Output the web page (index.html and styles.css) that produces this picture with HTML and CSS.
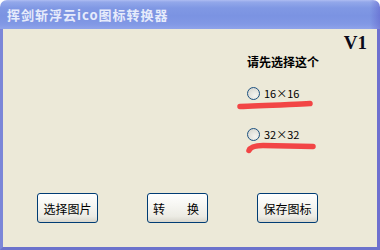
FILE: index.html
```html
<!DOCTYPE html>
<html lang="zh-CN">
<head>
<meta charset="utf-8">
<title>挥剑斩浮云ico图标转换器</title>
<link rel="stylesheet" href="styles.css">
</head>
<body>
<div class="window">
  <div class="titlebar">挥剑斩浮云ico图标转换器</div>
  <div class="content">
    <div class="version">V1</div>
    <div class="panel">
      <div class="prompt">请先选择这个</div>
      <div class="option first">
        <span class="radio"></span><span class="label">16×16</span>
        <svg class="mark" width="80" height="12" viewBox="0 0 80 12"><path d="M3 6.5 C 20 6.2, 50 4.6, 73 3.6" /></svg>
      </div>
      <div class="option second">
        <span class="radio"></span><span class="label">32×32</span>
        <svg class="mark" width="82" height="12" viewBox="0 0 82 12"><path d="M12 9.5 Q 14 4.5 26 4.5 L 76 5.5" /></svg>
      </div>
    </div>
    <div class="buttons">
      <button class="btn">选择图片</button>
      <button class="btn split"><span>转</span><span>换</span></button>
      <button class="btn">保存图标</button>
    </div>
  </div>
</div>
</body>
</html>
```
FILE: styles.css
```css
html, body {
  margin: 0;
  padding: 0;
  background: #ffffff;
}

.window {
  width: 380px;
  height: 250px;
  display: flex;
  flex-direction: column;
  font-family: "Noto Sans CJK SC", "Noto Sans", sans-serif;
}

.titlebar {
  height: 29px;
  box-sizing: border-box;
  padding: 0 0 0 7px;
  display: flex;
  align-items: center;
  border-radius: 7px 7px 0 0;
  background:
    linear-gradient(to right, rgba(0,0,0,0) 0, rgba(0,0,0,0) 370px, rgba(80,70,190,0.35) 380px),
    linear-gradient(to bottom, #aebdf2 0, #93a8ea 2px, #8098e4 8px, #7b93e2 16px, #8198e5 24px, #8fa3ea 29px);
  color: #e6ebfb;
  font-size: 13px;
  font-weight: bold;
  letter-spacing: 1px;
  line-height: 14px;
}

.content {
  flex: 1;
  display: flex;
  flex-direction: column;
  background: #ece9d8;
  border-left: 3px solid #7b86d8;
  border-right: 3px solid #6e70cf;
  border-bottom: 3px solid #6b72cc;
  padding: 4px 10px 0 0;
}

.version {
  align-self: flex-end;
  font-family: "Liberation Serif", serif;
  font-weight: bold;
  font-size: 19px;
  line-height: 20px;
  color: #0a0a1a;
}

.panel {
  margin-left: 244px;
  margin-top: 2px;
  display: flex;
  flex-direction: column;
}

.prompt {
  font-size: 12px;
  font-weight: bold;
  line-height: 14px;
  color: #000;
}

.option {
  position: relative;
  display: flex;
  align-items: center;
  height: 13px;
}

.option.first {
  margin-top: 18px;
}

.option.second {
  margin-top: 28px;
}

.radio {
  width: 11px;
  height: 11px;
  border: 1px solid #1c5180;
  border-radius: 50%;
  background: radial-gradient(circle at 65% 70%, #f4f4f0 0, #e2e2dc 55%, #d0d0c8 100%);
}

.label {
  margin-left: 4px;
  font-size: 11px;
  line-height: 13px;
  color: #000;
}

.mark {
  position: absolute;
  left: -10px;
  top: 13px;
  overflow: visible;
}

.mark path {
  fill: none;
  stroke: #f24545;
  stroke-width: 5.5;
  stroke-linecap: round;
}

.buttons {
  margin-top: auto;
  padding: 0 0 24px 34px;
  display: flex;
  gap: 49px;
}

.btn {
  width: 61px;
  height: 30px;
  margin: 0;
  padding: 0;
  border: 1px solid #003c74;
  border-radius: 3px;
  background: linear-gradient(to bottom, #ffffff 0, #f6f6f2 40%, #ecebe4 80%, #d8d6cc 100%);
  font-family: "Noto Sans CJK SC", sans-serif;
  font-size: 12px;
  color: #000;
  display: flex;
  align-items: center;
  justify-content: center;
}

.btn.split {
  justify-content: space-between;
  padding: 0 8px 0 5px;
}
```
